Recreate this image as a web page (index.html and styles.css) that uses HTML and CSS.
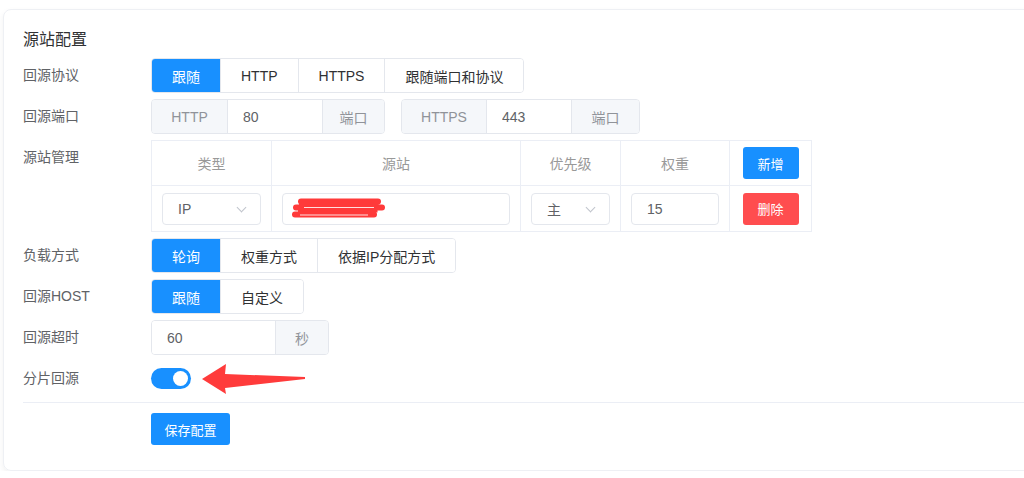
FILE: index.html
```html
<!DOCTYPE html>
<html lang="zh-CN">
  <head>
    <meta charset="UTF-8" />
    <meta name="viewport" content="width=device-width, initial-scale=1.0" />
    <title>源站配置</title>
    <link rel="stylesheet" href="styles.css">
  </head>
  <body>
    <div class="card">
      <h5 class="title">源站配置</h5>

      <div class="row">
        <label class="label">回源协议</label>
        <div class="seg">
          <button class="active">跟随</button>
          <button>HTTP</button>
          <button>HTTPS</button>
          <button>跟随端口和协议</button>
        </div>
      </div>

      <div class="row">
        <label class="label">回源端口</label>
        <div class="group">
          <span class="addon w76">HTTP</span>
          <input class="field w94" value="80" />
          <span class="addon w62">端口</span>
        </div>
        <div class="group gap">
          <span class="addon w85">HTTPS</span>
          <input class="field w84" value="443" />
          <span class="addon w68">端口</span>
        </div>
      </div>

      <div class="row">
        <label class="label">源站管理</label>
        <table class="origins">
          <thead>
            <tr>
              <th class="c1">类型</th>
              <th class="c2">源站</th>
              <th class="c3">优先级</th>
              <th class="c4">权重</th>
              <th class="c5"><button class="btn small">新增</button></th>
            </tr>
          </thead>
          <tbody>
            <tr>
              <td>
                <div class="select">IP<i class="chev"></i></div>
              </td>
              <td>
                <div class="text-box">
                  <svg class="scribble" width="96" height="22" viewBox="0 0 96 22">
                    <path d="M11 3.5 H88 M6 9.5 H92 M5 16.5 H84" fill="none" stroke="#ff3a3a" stroke-width="6" stroke-linecap="round" />
                    <path d="M9 6.5 H86 V13 H8" fill="none" stroke="#ff3a3a" stroke-width="3" />
                    <path d="M14 9.5 H84 M10 17 H78" fill="none" stroke="#ffe0e0" stroke-width="1" />
                  </svg>
                </div>
              </td>
              <td>
                <div class="select">主<i class="chev"></i></div>
              </td>
              <td>
                <div class="text-box">15</div>
              </td>
              <td><button class="btn small danger">删除</button></td>
            </tr>
          </tbody>
        </table>
      </div>

      <div class="row">
        <label class="label">负载方式</label>
        <div class="seg">
          <button class="active">轮询</button>
          <button>权重方式</button>
          <button>依据IP分配方式</button>
        </div>
      </div>

      <div class="row">
        <label class="label">回源HOST</label>
        <div class="seg">
          <button class="active">跟随</button>
          <button>自定义</button>
        </div>
      </div>

      <div class="row">
        <label class="label">回源超时</label>
        <div class="group">
          <input class="field w123" value="60" />
          <span class="addon w53">秒</span>
        </div>
      </div>

      <div class="row center">
        <label class="label">分片回源</label>
        <span class="switch"><i></i></span>
        <svg class="arrow" width="106" height="32" viewBox="0 0 106 32">
          <polygon points="1,16 25,1 24,11 104,14 104,16 24,25 25,31" fill="#ff3b3b" />
        </svg>
      </div>

      <div class="footer">
        <button class="btn save">保存配置</button>
      </div>
    </div>
  </body>
</html>
```

FILE: styles.css
```css
html,
body {
  margin: 0;
  background: #fff;
  overflow: hidden;
}

body {
  font-family: "Liberation Sans", "Noto Sans CJK SC", sans-serif;
  font-size: 14px;
  color: #606266;
}

.card {
  margin: 9px -40px 0 3px;
  padding: 19px 0 25px 19px;
  border: 1px solid #eef0f4;
  border-radius: 8px;
  box-shadow: 0 3px 6px rgba(0, 0, 0, 0.06);
}

.title {
  margin: 0 0 7px;
  font-size: 16px;
  font-weight: normal;
  line-height: 22px;
  color: #303133;
}

.row {
  display: flex;
  align-items: flex-start;
  margin-bottom: 6px;
}

.row.center {
  align-items: center;
}

.label {
  width: 128px;
  flex-shrink: 0;
  line-height: 35px;
  color: #606266;
}

/* segmented buttons */

.seg {
  display: flex;
  height: 35px;
  border: 1px solid #e4e7ed;
  border-radius: 4px;
  overflow: hidden;
  box-sizing: border-box;
}

.seg button {
  font: inherit;
  font-size: 14px;
  color: #303133;
  background: #fff;
  border: none;
  border-left: 1px solid #e4e7ed;
  padding: 0 20px;
  cursor: pointer;
}

.seg button:first-child {
  border-left: none;
}

.seg button.active {
  background: #1890ff;
  color: #fff;
}

/* input groups */

.group {
  display: flex;
  height: 35px;
  border: 1px solid #e4e7ed;
  border-radius: 4px;
  overflow: hidden;
  box-sizing: border-box;
}

.group.gap {
  margin-left: 16px;
}

.addon {
  display: flex;
  align-items: center;
  justify-content: center;
  background: #f5f7fa;
  color: #909399;
  box-sizing: border-box;
}

.addon:first-child {
  border-right: 1px solid #e4e7ed;
}

.addon:last-child {
  border-left: 1px solid #e4e7ed;
}

.field {
  font: inherit;
  color: #606266;
  border: none;
  outline: none;
  padding: 0 15px;
  box-sizing: border-box;
  background: #fff;
}

.w53 { width: 53px; }
.w62 { width: 62px; }
.w68 { width: 68px; }
.w76 { width: 76px; }
.w84 { width: 84px; }
.w85 { width: 85px; }
.w94 { width: 94px; }
.w123 { width: 123px; }

/* origin table */

.origins {
  border-collapse: collapse;
  table-layout: fixed;
  width: 660px;
}

.origins th,
.origins td {
  box-sizing: border-box;
  border: 1px solid #ebeef5;
  padding: 0 10px;
  text-align: center;
}

.origins th {
  height: 45px;
  font-weight: normal;
  color: #999;
}

.origins td {
  height: 46px;
}

.c1 { width: 120px; }
.c2 { width: 249px; }
.c3 { width: 100px; }
.c4 { width: 109px; }
.c5 { width: 82px; }

.select,
.text-box {
  position: relative;
  display: flex;
  align-items: center;
  height: 32px;
  padding: 0 15px;
  border: 1px solid #e4e7ed;
  border-radius: 4px;
  color: #606266;
  box-sizing: border-box;
  text-align: left;
}

.chev {
  position: absolute;
  right: 15px;
  top: 10px;
  width: 6px;
  height: 6px;
  border-right: 1px solid #c0c4cc;
  border-bottom: 1px solid #c0c4cc;
  transform: rotate(45deg);
}

.text-box {
  padding-left: 15px;
}

.text-box .scribble {
  margin-left: -8px;
}

/* buttons */

.btn {
  font: inherit;
  color: #fff;
  background: #1890ff;
  border: none;
  border-radius: 3px;
  cursor: pointer;
}

.btn.small {
  width: 56px;
  height: 32px;
  font-size: 13px;
}

.btn.danger {
  background: #ff4d4f;
}

.btn.save {
  width: 79px;
  height: 32px;
  font-size: 13px;
}

/* switch */

.switch {
  display: flex;
  justify-content: flex-end;
  align-items: center;
  width: 40px;
  height: 21px;
  padding: 0 3px;
  border-radius: 11px;
  background: #1890ff;
  box-sizing: border-box;
}

.switch i {
  width: 15px;
  height: 15px;
  border-radius: 50%;
  background: #fff;
}

.arrow {
  margin-left: 10px;
}

.footer {
  border-top: 1px solid #ebeef5;
  margin-top: 6px;
  padding: 10px 0 0 128px;
}
```
